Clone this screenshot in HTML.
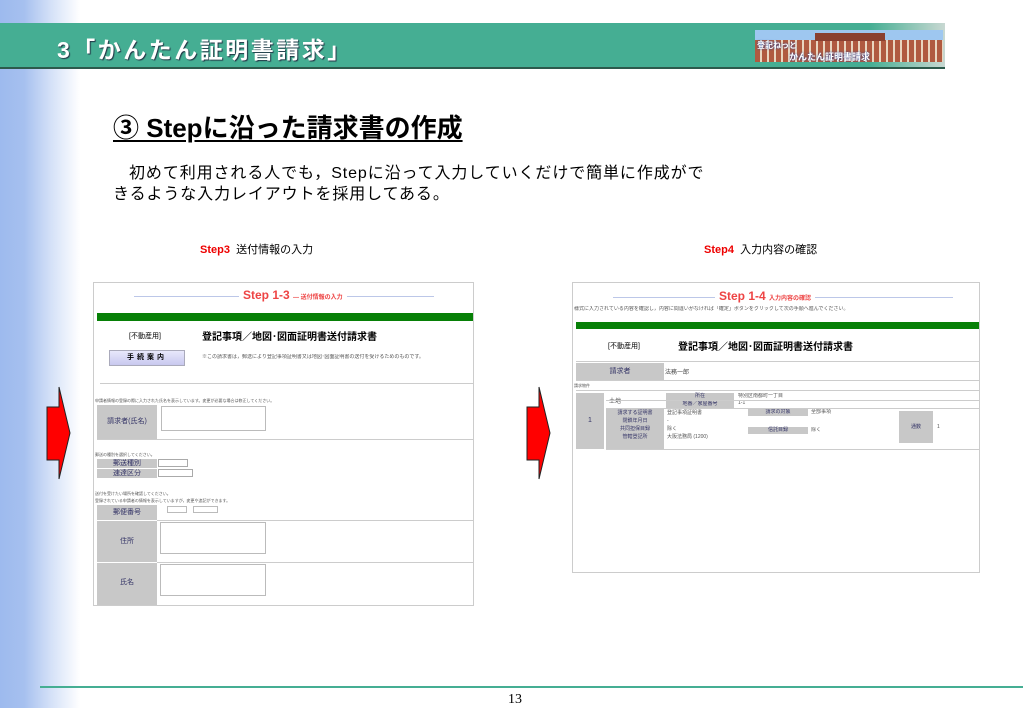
<!DOCTYPE html>
<html><head><meta charset="utf-8"><style>
*{margin:0;padding:0;box-sizing:border-box}
body{width:1023px;height:708px;position:relative;overflow:hidden;background:#fff;font-family:"Liberation Sans","Noto Sans CJK JP",sans-serif;color:#000}
.a{position:absolute}
.grad{left:0;top:0;width:80px;height:708px;background:linear-gradient(to right,#9dbaee 0,#a6c0ef 30%,#d6e2f8 65%,#fff 100%)}
.band{left:0;top:23px;width:945px;height:46px;background:linear-gradient(to right,#45ae93 0,#45ae93 92%,#c8d8d2 100%);border-bottom:2px solid #2c5a4c}
.title{left:57px;top:31px;font-size:23px;font-weight:bold;color:#fff;text-shadow:1px 1px 1px #234;letter-spacing:2.5px}
.logo{left:755px;top:30px;width:188px;height:32px;background:repeating-linear-gradient(to right,#b05a40 0 5px,#e9d6c0 5px 7px);}
.sm{font-size:4px;color:#555;line-height:7px;white-space:nowrap;overflow:hidden}
.cell{background:#c8c8c8;color:#336;font-size:7px;text-align:center}
.ln{background:#ccc;height:1px}
</style></head><body>
<div class="a grad"></div>
<div class="a band"></div>
<div class="a title">3「かんたん証明書請求」</div>
<div class="a logo">
 <div class="a" style="left:0;top:0;width:188px;height:10px;background:#9ec7f0"></div>
 <div class="a" style="left:60px;top:3px;width:70px;height:8px;background:#8a4030"></div>
 <div class="a" style="left:2px;top:10px;font-size:8px;font-weight:bold;color:#fff;text-shadow:0 0 2px #14a">登記ねっと</div>
 <div class="a" style="left:34px;top:20px;font-size:9px;font-weight:bold;color:#fff;text-shadow:0 0 2px #14a">かんたん証明書請求</div>
</div>
<div class="a" style="left:113px;top:108px;font-size:26px;font-weight:bold;text-decoration:underline;text-underline-offset:3px">③ Stepに沿った請求書の作成</div>
<div class="a" style="left:113px;top:163px;font-size:16px;line-height:21px;white-space:nowrap;letter-spacing:0.9px">&nbsp;&nbsp;&nbsp;初めて利用される人でも，Stepに沿って入力していくだけで簡単に作成がで<br>きるような入力レイアウトを採用してある。</div>
<div class="a" style="left:200px;top:241px;font-size:11px"><span style="color:#e00;font-weight:bold">Step3</span>&nbsp; 送付情報の入力</div>
<div class="a" style="left:704px;top:241px;font-size:11px"><span style="color:#e00;font-weight:bold">Step4</span>&nbsp; 入力内容の確認</div>

<svg class="a" style="left:44px;top:384px" width="30" height="100"><path d="M3 23H15V3L26 49L15 95V76H3Z" fill="#f00" stroke="#222" stroke-width="1"/></svg>
<svg class="a" style="left:524px;top:384px" width="30" height="100"><path d="M3 23H15V3L26 49L15 95V76H3Z" fill="#f00" stroke="#222" stroke-width="1"/></svg>

<div class="a" style="left:93px;top:282px;width:381px;height:324px;border:1px solid #ccc;background:#fff;overflow:hidden">
 <div class="a" style="left:40px;top:13px;width:300px;height:1px;background:#bcc7e8"></div>
 <div class="a" style="left:145px;top:5px;background:#fff;padding:0 4px;font-size:12px;font-weight:bold;color:#e44">Step 1-3 <span style="font-size:6px">— 送付情報の入力</span></div>
 <div class="a" style="left:3px;top:30px;width:380px;height:8px;background:#078007"></div>
 <div class="a" style="left:35px;top:48px;font-size:7px">[不動産用]</div>
 <div class="a" style="left:108px;top:45px;font-size:10px;font-weight:bold">登記事項／地図･図面証明書送付請求書</div>
 <div class="a" style="left:15px;top:67px;width:76px;height:16px;background:linear-gradient(#e8e8fb,#c8c8ef);border:1px solid #aab;font-size:7px;font-weight:bold;text-align:center;line-height:14px;letter-spacing:3px">手続案内</div>
 <div class="a sm" style="left:108px;top:71px;font-size:5px">※この請求書は，郵送により登記事項証明書又は地図･図面証明書の送付を受けるためのものです。</div>
 <div class="a ln" style="left:6px;top:100px;width:375px"></div>
 <div class="a sm" style="left:1px;top:114px">申請者情報の登録の際に入力された氏名を表示しています。変更が必要な場合は修正してください。</div>
 <div class="a cell" style="left:3px;top:122px;width:60px;height:34px;line-height:34px">請求者(氏名)</div>
 <div class="a" style="left:67px;top:123px;width:105px;height:25px;border:1px solid #bbb"></div>
 <div class="a ln" style="left:3px;top:156px;width:378px"></div>
 <div class="a sm" style="left:1px;top:168px">郵送の種別を選択してください。</div>
 <div class="a cell" style="left:3px;top:176px;width:60px;height:9px;line-height:9px">郵送種別</div>
 <div class="a cell" style="left:3px;top:186px;width:60px;height:9px;line-height:9px">速達区分</div>
 <div class="a" style="left:64px;top:176px;width:30px;height:8px;border:1px solid #aaa"></div>
 <div class="a" style="left:64px;top:186px;width:35px;height:8px;border:1px solid #aaa"></div>
 <div class="a sm" style="left:1px;top:207px">送付を受けたい場所を確認してください。<br>登録されている申請者の情報を表示していますが，変更や追記ができます。</div>
 <div class="a cell" style="left:3px;top:222px;width:60px;height:15px;line-height:15px">郵便番号</div>
 <div class="a cell" style="left:3px;top:238px;width:60px;height:41px;line-height:41px">住所</div>
 <div class="a cell" style="left:3px;top:280px;width:60px;height:44px;line-height:40px">氏名</div>
 <div class="a ln" style="left:63px;top:237px;width:318px"></div>
 <div class="a ln" style="left:63px;top:279px;width:318px"></div>
 <div class="a" style="left:66px;top:239px;width:106px;height:32px;border:1px solid #bbb"></div>
 <div class="a" style="left:66px;top:281px;width:106px;height:32px;border:1px solid #bbb"></div>
 <div class="a" style="left:73px;top:223px;width:20px;height:7px;border:1px solid #bbb"></div>
 <div class="a" style="left:99px;top:223px;width:25px;height:7px;border:1px solid #bbb"></div>
</div>

<div class="a" style="left:572px;top:282px;width:408px;height:291px;border:1px solid #ccc;background:#fff;overflow:hidden">
 <div class="a" style="left:40px;top:14px;width:340px;height:1px;background:#bcc7e8"></div>
 <div class="a" style="left:142px;top:6px;background:#fff;padding:0 4px;font-size:12px;font-weight:bold;color:#e44">Step 1-4 <span style="font-size:6px">入力内容の確認</span></div>
 <div class="a sm" style="left:1px;top:23px;font-size:5px">様式に入力されている内容を確認し，内容に間違いがなければ「確定」ボタンをクリックして次の手順へ進んでください。</div>
 <div class="a" style="left:3px;top:39px;width:405px;height:7px;background:#078007"></div>
 <div class="a" style="left:35px;top:58px;font-size:7px">[不動産用]</div>
 <div class="a" style="left:105px;top:55px;font-size:10px;font-weight:bold">登記事項／地図･図面証明書送付請求書</div>
 <div class="a ln" style="left:3px;top:78px;width:405px"></div>
 <div class="a cell" style="left:3px;top:80px;width:88px;height:17px;line-height:17px">請求者</div>
 <div class="a" style="left:92px;top:84px;font-size:6px;color:#444">法務一郎</div>
 <div class="a ln" style="left:3px;top:97px;width:405px"></div>
 <div class="a sm" style="left:1px;top:99px">請求物件</div>
 <div class="a ln" style="left:3px;top:107px;width:405px"></div>
 <div class="a cell" style="left:3px;top:110px;width:28px;height:56px;line-height:56px">1</div>
 <div class="a" style="left:36px;top:113px;font-size:6px;color:#444">土地</div>
 <div class="a cell" style="left:93px;top:110px;width:68px;height:7px;line-height:7px;font-size:5px">所在</div>
 <div class="a cell" style="left:93px;top:118px;width:68px;height:7px;line-height:7px;font-size:5px">地番／家屋番号</div>
 <div class="a sm" style="left:165px;top:110px;font-size:5px">特別区南都町一丁目<br>1-1</div>
 <div class="a cell" style="left:33px;top:126px;width:58px;height:40px;font-size:5px;line-height:8px">請求する証明書<br>閉鎖年月日<br>共同担保目録<br>管轄登記所</div>
 <div class="a sm" style="left:94px;top:126px;font-size:5px;line-height:8px">登記事項証明書<br>-<br>除く<br>大阪法務局 (1200)</div>
 <div class="a cell" style="left:175px;top:126px;width:60px;height:7px;font-size:5px;line-height:7px">請求の対象</div>
 <div class="a sm" style="left:238px;top:126px;font-size:5px">全部事項</div>
 <div class="a cell" style="left:175px;top:144px;width:60px;height:7px;font-size:5px;line-height:7px">信託目録</div>
 <div class="a sm" style="left:238px;top:144px;font-size:5px">除く</div>
 <div class="a cell" style="left:326px;top:128px;width:34px;height:32px;line-height:32px;font-size:5px">通数</div>
 <div class="a sm" style="left:364px;top:141px;font-size:5px">1</div>
 <div class="a ln" style="left:33px;top:117px;width:375px"></div>
 <div class="a ln" style="left:33px;top:125px;width:375px"></div>
 <div class="a ln" style="left:33px;top:166px;width:375px"></div>
</div>

<div class="a" style="left:40px;top:686px;width:983px;height:2px;background:#45ae93"></div>
<div class="a" style="left:508px;top:692px;font-family:'Liberation Serif',serif;font-size:14px">13</div>
</body></html>
